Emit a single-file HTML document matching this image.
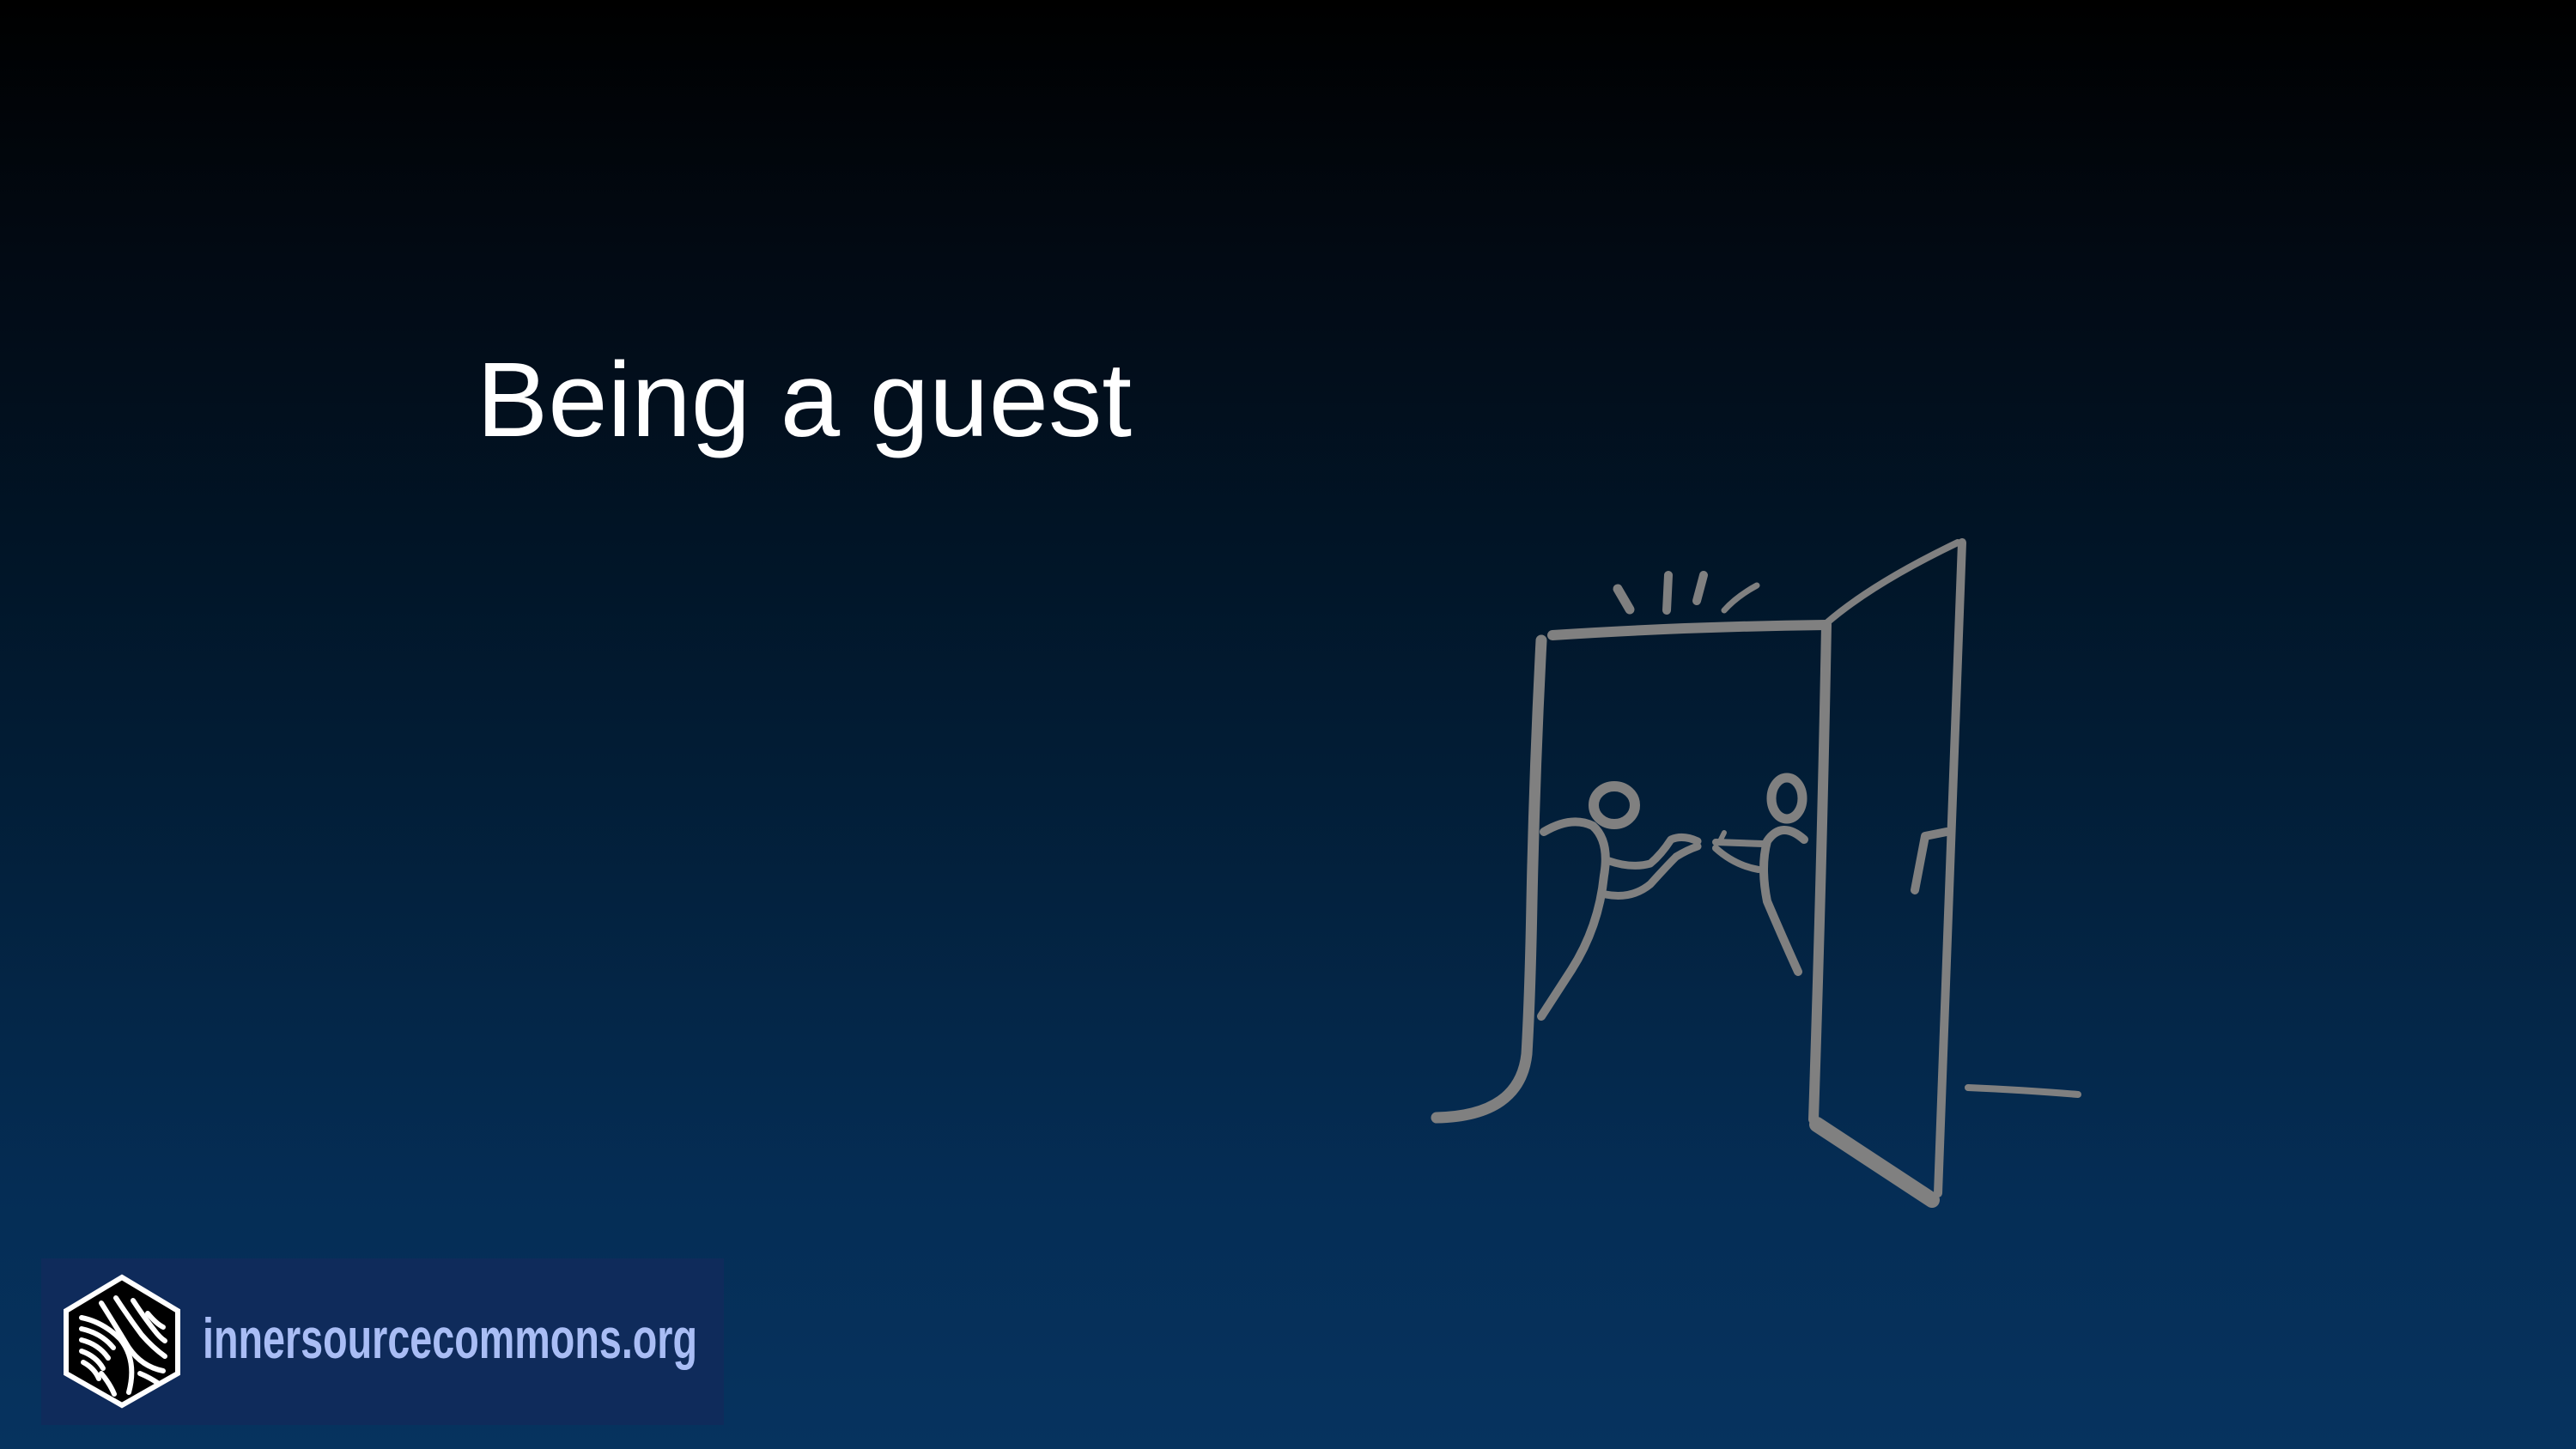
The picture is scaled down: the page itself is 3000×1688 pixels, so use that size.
<!DOCTYPE html>
<html><head><meta charset="utf-8"><style>
html,body{margin:0;padding:0;width:3000px;height:1688px;overflow:hidden}
body{background:linear-gradient(180deg,#000000 0%,#020a14 18%,#011629 40%,#03223f 62%,#052d55 82%,#06335f 100%)}
svg{position:absolute;left:0;top:0}
</style></head><body>
<svg width="3000" height="1688" viewBox="0 0 3000 1688" xmlns="http://www.w3.org/2000/svg">
<text x="555" y="508" font-family="Liberation Sans, Arial, sans-serif" font-size="123" fill="#ffffff" textLength="763" lengthAdjust="spacingAndGlyphs">Being a guest</text>

<g fill="none" stroke="#808080" stroke-linecap="round" stroke-linejoin="round">
<path d="M1808 740 Q1960 730 2127 728" stroke-width="12"/>
<path d="M1795 746 Q1787 900 1784 1050 Q1782 1160 1778 1228 Q1770 1300 1673 1302" stroke-width="13"/>
<path d="M2127 728 Q2122 1000 2112 1304" stroke-width="12"/>
<path d="M2127 726 Q2180 680 2280 632" stroke-width="8"/>
<path d="M2285 632 Q2272 1000 2257 1390" stroke-width="10"/>
<path d="M2116 1310 L2250 1398" stroke-width="18"/>
<path d="M2267 969 L2242 974 L2230 1037" stroke-width="10"/>
<path d="M2292 1267 Q2360 1270 2420 1275" stroke-width="8"/>
<path d="M1884 686 L1898 710" stroke-width="11"/>
<path d="M1943 670 L1941 711" stroke-width="10"/>
<path d="M1984 670 L1976 700" stroke-width="10"/>
<path d="M2046 682 Q2022 695 2008 711" stroke-width="7"/>
<ellipse cx="1880" cy="938" rx="24" ry="22" stroke-width="12"/>
<path d="M1798 969 Q1830 950 1855 962 Q1875 980 1868 1020 Q1862 1080 1830 1130 L1795 1184" stroke-width="10"/>
<path d="M1874 1003 Q1900 1012 1922 1006 Q1935 995 1946 978 Q1960 972 1977 980" stroke-width="9"/>
<path d="M1870 1042 Q1900 1048 1922 1030 Q1940 1010 1952 998 Q1965 990 1977 986" stroke-width="9"/>
<ellipse cx="2081" cy="930" rx="18" ry="24" stroke-width="11"/>
<path d="M2101 978 Q2075 955 2058 980 Q2050 1010 2058 1050 Q2075 1090 2094 1132" stroke-width="10"/>
<path d="M1998 981 L2053 983" stroke-width="8"/>
<path d="M1998 988 Q2020 1008 2048 1013" stroke-width="8"/>
<path d="M2008 970 L2003 980" stroke-width="6"/>
</g>

<rect x="48" y="1466" width="795" height="194" fill="#0f2b5b"/>
<polygon points="142,1488 207,1527 207,1600 142,1637 77,1600 77,1527" fill="#000" stroke="#fff" stroke-width="6"/>
<g stroke="#fff" stroke-width="6" fill="none" stroke-linecap="round">
<path d="M95 1535 Q120 1540 140 1560 Q160 1585 150 1622"/>
<path d="M95 1548 Q118 1553 132 1570"/>
<path d="M95 1561 Q115 1566 126 1582"/>
<path d="M95 1574 Q112 1580 120 1594"/>
<path d="M97 1587 Q110 1594 115 1606"/>
<path d="M118 1518 Q135 1545 150 1570 Q165 1592 190 1597"/>
<path d="M135 1512 Q150 1535 165 1555 Q178 1570 192 1580"/>
<path d="M155 1515 Q168 1535 180 1550 Q186 1558 192 1562"/>
<path d="M172 1530 Q182 1542 190 1546"/>
<path d="M118 1600 Q128 1612 133 1624"/>
<path d="M163 1600 Q175 1605 185 1612"/>
</g>
<text x="236" y="1582" font-family="Liberation Sans Narrow, Liberation Sans, Arial, sans-serif" font-weight="bold" font-size="66" fill="#a9bdf5" textLength="576" lengthAdjust="spacingAndGlyphs">innersourcecommons.org</text>
</svg>
</body></html>
